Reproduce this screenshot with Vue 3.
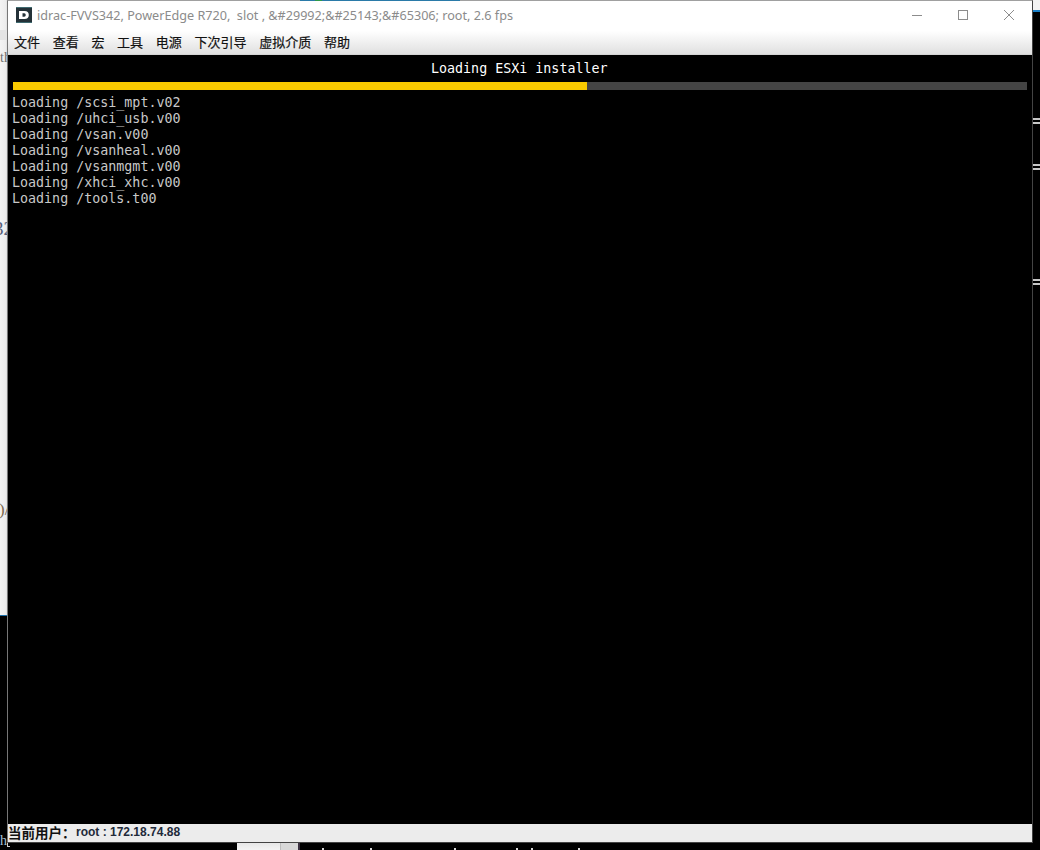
<script setup>
const menus = ['文件', '查看', '宏', '工具', '电源', '下次引导', '虚拟介质', '帮助']
const lines = [
  'Loading /scsi_mpt.v02',
  'Loading /uhci_usb.v00',
  'Loading /vsan.v00',
  'Loading /vsanheal.v00',
  'Loading /vsanmgmt.v00',
  'Loading /xhci_xhc.v00',
  'Loading /tools.t00'
]
const dashes = [118, 164, 279]
const specks = [322, 370, 454, 516, 531, 578]
</script>

<template>
  <div class="desktop">
    <div class="backdrop-left">
      <span class="peek peek-a">th</span>
      <span class="peek peek-b">32</span>
      <span class="peek peek-c">)/</span>
    </div>
    <span class="peek peek-d">h</span>
    <i class="bracket"></i>
    <div class="backdrop-top"><i class="green"></i></div>
    <div class="backdrop-right"></div>
    <div class="backdrop-bottom"><i class="divider"></i></div>
    <i v-for="y in dashes" :key="y" class="dash" :style="{ top: y + 'px' }"></i>
    <i v-for="x in specks" :key="x" class="speck" :style="{ left: x + 'px' }"></i>

    <section class="window">
      <header class="chrome">
        <div class="titlebar">
          <svg class="app-icon" width="16" height="16" viewBox="0 0 16 16">
            <rect width="16" height="16" fill="#243238" />
            <path d="M0 0h16v1H0zM0 15h16v1H0z" fill="#3f6a70" />
            <path d="M3 4h5.500c2.900 0 4.300 1.600 4.300 4s-1.400 4-4.300 4H3zM6.500 6.300v3.400h1.700c1.100 0 1.500-.7 1.500-1.700s-.4-1.700-1.500-1.700z" fill="#fff" fill-rule="evenodd" />
          </svg>
          <span class="title">idrac-FVVS342, PowerEdge R720,&nbsp; slot , &amp;#29992;&amp;#25143;&amp;#65306; root, 2.6 fps</span>
          <div class="controls">
            <svg width="12" height="12" viewBox="0 0 12 12"><path d="M1 6.500h10" stroke="#8c8c8c" fill="none" /></svg>
            <svg width="12" height="12" viewBox="0 0 12 12"><rect x="1.500" y="1.500" width="9" height="9" stroke="#8c8c8c" fill="none" /></svg>
            <svg width="12" height="12" viewBox="0 0 12 12"><path d="M1 1l10 10M11 1L1 11" stroke="#8c8c8c" fill="none" /></svg>
          </div>
        </div>
        <nav class="menubar">
          <span v-for="m in menus" :key="m">{{ m }}</span>
        </nav>
      </header>

      <main class="console">
        <div class="heading">Loading ESXi installer</div>
        <div class="progress"><div class="fill"></div></div>
        <div class="log">
          <div v-for="l in lines" :key="l">{{ l }}</div>
        </div>
      </main>

      <footer class="status">
        <b class="user">当前用户：</b><b class="addr">root : 172.18.74.88</b>
      </footer>
    </section>
  </div>
</template>

<style>
html, body { margin: 0; background: #000; }
</style>

<style scoped>
.desktop {
  position: relative;
  width: 1040px;
  height: 850px;
  overflow: hidden;
  background: #000;
}
.backdrop-left {
  position: absolute;
  left: 0;
  top: 0;
  width: 8px;
  height: 615px;
  overflow: hidden;
  background: linear-gradient(90deg, #f4f4f4 0, #ececec 6px, #dcdcdc 7px);
  border-bottom: 1px solid #1a6ea8;
}
.backdrop-left::before {
  content: "";
  position: absolute;
  left: 0;
  top: 30px;
  width: 8px;
  height: 10px;
  background: #e4e4e4;
}
.peek {
  position: absolute;
  white-space: nowrap;
  font-family: "Liberation Serif", serif;
}
.peek-a { left: 0; top: 50px; font-size: 14px; color: #6e6e6e; }
.peek-b { left: -6px; top: 218px; font-size: 19px; color: #55607a; }
.peek-c { left: -1px; top: 500px; font-size: 17px; color: #7d6a50; }
.peek-d { left: 0; top: 833px; font-size: 14px; color: #a8c0d8; }
.bracket {
  position: absolute;
  left: 7px;
  top: 838px;
  width: 3px;
  height: 9px;
  box-sizing: border-box;
  border-left: 1px solid #cfcfcf;
  border-bottom: 1px solid #cfcfcf;
}
.backdrop-top {
  position: absolute;
  z-index: 2;
  left: 300px;
  top: 0;
  width: 160px;
  height: 1px;
  background: #2a7aa8;
}
.green {
  position: absolute;
  left: 15px;
  top: 0;
  width: 7px;
  height: 1px;
  background: #2f9a4a;
}
.backdrop-right {
  position: absolute;
  left: 1033px;
  top: 0;
  width: 7px;
  height: 12px;
  background: #f4f4f4;
  border-bottom: 2px solid #1a80c8;
  box-sizing: border-box;
}
.backdrop-bottom {
  position: absolute;
  left: 237px;
  top: 843px;
  width: 61px;
  height: 7px;
  background: linear-gradient(#e8e8e8, #f4f4f4);
  border-right: 2px solid #3a3040;
}
.divider {
  position: absolute;
  left: 43px;
  top: 0;
  width: 18px;
  height: 7px;
  background: #d8d8d8;
  border-left: 1px solid #bdbdbd;
  box-sizing: border-box;
}
.dash {
  position: absolute;
  left: 1033px;
  width: 7px;
  height: 6px;
  border-top: 2px solid #c8c8c8;
  border-bottom: 2px solid #c8c8c8;
  box-sizing: border-box;
}
.speck {
  position: absolute;
  top: 848px;
  width: 2px;
  height: 2px;
  background: #d8d8d8;
}
.window {
  position: absolute;
  left: 7px;
  top: 0;
  width: 1024px;
  height: 841px;
  display: flex;
  flex-direction: column;
  border-left: 1px solid #777;
  border-right: 1px solid #444;
  border-bottom: 1px solid #444;
  border-top: 1px solid #a0a0a0;
}
.chrome {
  height: 54px;
  flex: none;
  box-sizing: border-box;
  background: linear-gradient(#fff 0, #fff 30px, #e0e0e0 53px);
  border-bottom: 1px solid #d4d4d4;
  display: flex;
  flex-direction: column;
}
.titlebar {
  height: 28px;
  flex: none;
  display: flex;
  align-items: center;
  padding-left: 8px;
}
.app-icon { flex: none; }
.title {
  margin-left: 5px;
  font: 12.63px "Noto Sans", sans-serif;
  color: #8b8b8b;
  white-space: nowrap;
}
.controls {
  margin-left: auto;
  display: flex;
  gap: 34px;
  padding-right: 17px;
}
.menubar {
  height: 25px;
  box-sizing: border-box;
  padding: 0 0 1px 6px;
  display: flex;
  align-items: center;
  gap: 12.7px;
  font: 13px "Noto Sans CJK SC", sans-serif;
  color: #111;
  -webkit-text-stroke: 0.2px #111;
}
.console {
  flex: 1;
  background: #000;
  padding-top: 6px;
  font: 13.33px/16px "DejaVu Sans Mono", monospace;
  color: #c8c8c8;
}
.heading {
  height: 16px;
  padding-left: 423px;
  color: #fff;
  white-space: pre;
}
.progress {
  margin: 5px 5px 0 5px;
  height: 8px;
  background: #444;
}
.fill {
  width: 574px;
  height: 8px;
  background: #f9ca00;
}
.log {
  margin-top: 5px;
  padding-left: 4px;
}
.status {
  height: 18px;
  box-sizing: border-box;
  padding-bottom: 2px;
  flex: none;
  background: #ececec;
  display: flex;
  align-items: center;
  color: #111;
}
.user {
  font: 700 13.5px/16px "Noto Sans CJK SC", sans-serif;
  width: 68px;
  white-space: nowrap;
}
.addr {
  font: 700 12px/16px "Liberation Sans", sans-serif;
  color: #222a3a;
}
</style>
